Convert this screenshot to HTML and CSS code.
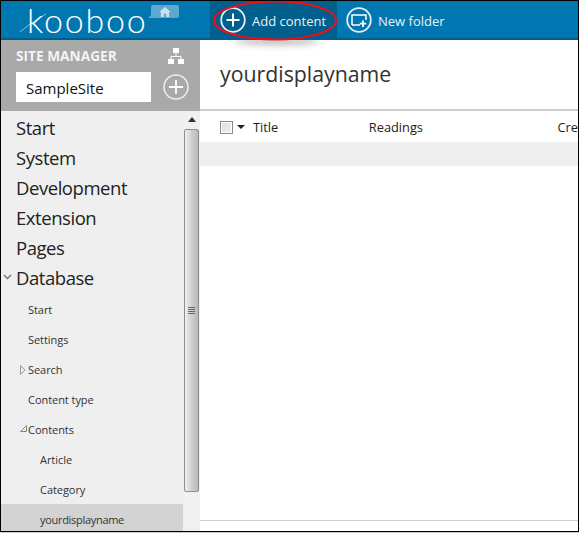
FILE: index.html
```html
<!DOCTYPE html>
<html lang="en">
  <head>
    <meta charset="utf-8">
    <meta name="viewport" content="width=device-width, initial-scale=1.0">
    <title>Kooboo</title>
    <link rel="stylesheet" href="styles.css">
  </head>
  <body>
    <div class="window">
      <!-- top bar -->
      <header class="topbar">
        <div class="brand">
          <svg class="swoosh" width="30" height="22" viewBox="0 0 30 22"><path d="M1 20 Q10 12 27 2" fill="none" stroke="#a9d3e8" stroke-width=".8"/></svg>
          <span class="logo">kooboo</span>
          <span class="home-tag">
            <svg width="12" height="10" viewBox="0 0 14 12"><path d="M7 0 L14 6 H12 V12 H8.500 V8 H5.500 V12 H2 V6 H0 Z" fill="#cfe0ea"/></svg>
          </span>
        </div>
        <div class="action action-active">
          <svg class="action-icon" width="26" height="26" viewBox="0 0 26 26"><circle cx="13" cy="13" r="11.800" fill="none" stroke="#e4eef4" stroke-width="1.800"/><path d="M13 6.500 V19.500 M6.500 13 H19.500" stroke="#fff" stroke-width="2"/></svg>
          <span>Add content</span>
        </div>
        <div class="action">
          <svg class="action-icon" width="26" height="26" viewBox="0 0 26 26"><circle cx="13" cy="13" r="11.800" fill="none" stroke="#e4eef4" stroke-width="1.800"/><path d="M6 18 V8 H20 V13 M6 18 H14" fill="none" stroke="#fff" stroke-width="1.500"/><path d="M17 13.500 V20 M13.800 16.700 H20.200" stroke="#fff" stroke-width="1.800"/></svg>
          <span>New folder</span>
        </div>
        <!-- red marker drawn over the screenshot -->
        <span class="marker-shadow"></span>
        <svg class="marker" width="150" height="44" viewBox="0 0 150 44"><ellipse cx="75" cy="20.500" rx="61" ry="19" fill="none" stroke="#e5101c" stroke-width="2.200"/></svg>
      </header>

      <div class="content">
        <aside class="sidebar">
          <div class="site-panel">
            <div class="site-title">
              <span>SITE MANAGER</span>
              <svg width="18" height="18" viewBox="0 0 18 18"><path d="M6 1 H12 V6 H6 Z M1 12 H7 V17 H1 Z M11 12 H17 V17 H11 Z" fill="#fff"/><path d="M9 6 V9.500 M4 12 V9.500 H14 V12" fill="none" stroke="#fff"/></svg>
            </div>
            <div class="site-row">
              <div class="site-input">SampleSite</div>
              <svg width="26" height="26" viewBox="0 0 26 26"><circle cx="13" cy="13" r="12" fill="none" stroke="#eee" stroke-width="1.500"/><path d="M13 6 V20 M6 13 H20" stroke="#fff" stroke-width="1.800"/></svg>
            </div>
          </div>
          <div class="tree-wrap">
            <ul class="tree">
              <li class="big">Start</li>
              <li class="big">System</li>
              <li class="big">Development</li>
              <li class="big">Extension</li>
              <li class="big">Pages</li>
              <li class="big">
                <svg class="arrow-down" width="9" height="6" viewBox="0 0 9 6"><path d="M1 1 L4.500 4.500 L8 1" fill="none" stroke="#777" stroke-width="1.500"/></svg>
                Database
              </li>
              <li class="small">Start</li>
              <li class="small">Settings</li>
              <li class="small">
                <svg class="arrow" width="6" height="10" viewBox="0 0 6 10"><path d="M.5 .5 L5 5 L.5 9.500 Z" fill="none" stroke="#999"/></svg>
                Search
              </li>
              <li class="small">Content type</li>
              <li class="small">
                <svg class="arrow" width="7" height="7" viewBox="0 0 7 7"><path d="M6.500 .5 V6.500 H.5 Z" fill="none" stroke="#888"/></svg>
                Contents
              </li>
              <li class="small nested">Article</li>
              <li class="small nested">Category</li>
              <li class="small nested selected">yourdisplayname</li>
            </ul>
            <div class="scrollbar">
              <svg class="scroll-up" width="8" height="5" viewBox="0 0 8 5"><path d="M4 0 L8 5 H0 Z" fill="#333"/></svg>
              <div class="scroll-thumb"><span class="grip"></span></div>
            </div>
          </div>
        </aside>

        <main class="main">
          <h1 class="page-title">yourdisplayname</h1>
          <div class="grid-head">
            <span class="check"></span>
            <svg class="caret" width="8" height="4" viewBox="0 0 8 4"><path d="M0 0 H8 L4 4 Z" fill="#222"/></svg>
            <span class="col col-title">Title</span>
            <span class="col col-readings">Readings</span>
            <span class="col">Cre</span>
          </div>
          <div class="grid-row"></div>
          <div class="grid-space"></div>
          <div class="grid-foot"></div>
        </main>
      </div>
    </div>
  </body>
</html>
```

FILE: styles.css
```css
* {
  box-sizing: border-box;
}
html, body {
  margin: 0;
  padding: 0;
  background-color: #ccc;
  color: #222;
  font-family: "Open Sans", "Noto Sans", sans-serif;
}

.window {
  width: 579px;
  height: 532px;
  border: 1px solid #000;
  display: flex;
  flex-direction: column;
  overflow: hidden;
  background-color: #fff;
}

/* top bar */
.topbar {
  position: relative;
  height: 39px;
  flex: none;
  display: flex;
  background-color: #0077b0;
  border-bottom: 2px solid #005f8c;
  color: #e8f1f6;
}
.brand {
  position: relative;
  width: 209px;
}
.swoosh {
  position: absolute;
  left: 18px;
  top: 11px;
}
.logo {
  position: absolute;
  left: 26px;
  top: 0;
  line-height: 38px;
  font-family: Lato, sans-serif;
  font-weight: 300;
  font-size: 34px;
  letter-spacing: 1.800px;
  color: #fff;
}
.home-tag {
  position: absolute;
  left: 150px;
  top: 4px;
  width: 28px;
  height: 13px;
  display: flex;
  align-items: center;
  justify-content: center;
  background-color: #5ea8cf;
  border-radius: 2px;
}
.home-tag::before {
  content: "";
  position: absolute;
  left: -3px;
  bottom: 0;
  border-style: solid;
  border-width: 0 0 4px 4px;
  border-color: transparent transparent #5ea8cf transparent;
}
.action {
  display: flex;
  align-items: center;
  gap: 6px;
  padding: 0 10px 0 9px;
  font-size: 13px;
  height: 37px;
}
.action span {
  padding-top: 2px;
}
.action-active {
  width: 127px;
  padding-left: 10px;
  background-color: #005f8c;
}
.action-icon {
  flex: none;
}
.marker {
  position: absolute;
  left: 199px;
  top: -1px;
  z-index: 2;
}
.marker-shadow {
  position: absolute;
  left: 234px;
  top: 34px;
  width: 84px;
  height: 5px;
  border-radius: 50%;
  box-shadow: 0 4px 6px 1px rgba(90, 90, 90, .4);
  clip-path: inset(4px -20px -20px -20px);
  z-index: 1;
}

/* sidebar */
.content {
  flex: 1;
  display: flex;
  min-height: 0;
}
.sidebar {
  width: 199px;
  flex: none;
  display: flex;
  flex-direction: column;
  background-color: #efefef;
}
.site-panel {
  height: 71px;
  flex: none;
  padding: 5px 10px 0 15px;
  background-color: #a9a9a9;
}
.site-title {
  display: flex;
  justify-content: space-between;
  align-items: center;
  font-size: 13.700px;
  font-weight: 700;
  color: #f4f4f4;
  height: 20px;
}
.site-title svg {
  margin: 2px 5px 0 0;
}
.site-row {
  display: flex;
  justify-content: space-between;
  align-items: center;
  margin-top: 7px;
  padding-right: 1px;
}
.site-input {
  width: 135px;
  height: 30px;
  padding-left: 10px;
  padding-top: 1px;
  line-height: 30px;
  font-size: 15px;
  background-color: #fff;
  color: #111;
}
.tree-wrap {
  flex: 1;
  display: flex;
  min-height: 0;
}
.tree {
  flex: 1;
  margin: 0;
  padding: 3px 0 0 0;
  list-style: none;
}
.tree li {
  position: relative;
  height: 30px;
}
.big {
  padding-left: 15px;
  font-size: 18.500px;
  letter-spacing: -.45px;
  line-height: 28px;
  color: #222;
}
.small {
  padding-left: 27px;
  font-size: 11px;
  letter-spacing: -.05px;
  line-height: 32px;
  color: #333;
}
.nested {
  padding-left: 39px;
}
.selected {
  background-color: #d3d3d3;
  letter-spacing: -.3px;
}
.arrow-down {
  position: absolute;
  left: 2px;
  top: 10px;
}
.arrow {
  position: absolute;
  left: 19px;
  top: 11px;
}

/* scrollbar */
.scrollbar {
  width: 17px;
  flex: none;
  padding-top: 6px;
  display: flex;
  flex-direction: column;
  align-items: center;
  background-color: #f0f0f0;
}
.scroll-up {
  flex: none;
}
.scroll-thumb {
  width: 15px;
  height: 363px;
  margin-top: 7px;
  flex: none;
  display: flex;
  align-items: center;
  justify-content: center;
  border: 1px solid #8f8f8f;
  border-radius: 2px;
  background: linear-gradient(to right, #f0f0f0, #d0d0d0 50%, #b8b8b8);
}
.grip {
  width: 7px;
  height: 7px;
  background: repeating-linear-gradient(to bottom, #666 0, #666 1px, transparent 1px, transparent 2px);
}

/* main area */
.main {
  flex: 1;
  min-width: 0;
  display: flex;
  flex-direction: column;
  overflow: hidden;
}
.page-title {
  height: 71px;
  flex: none;
  margin: 0;
  padding: 0 0 0 20px;
  line-height: 67px;
  font-size: 21.300px;
  font-weight: 400;
  color: #333;
  border-bottom: 2px solid #cfcfcf;
}
.grid-head {
  height: 31px;
  flex: none;
  display: flex;
  align-items: center;
  padding-left: 20px;
  padding-top: 1px;
  font-size: 12.800px;
  white-space: nowrap;
}
.check {
  width: 13px;
  height: 13px;
  flex: none;
  border: 1px solid #8a8a8a;
  background: linear-gradient(135deg, #ddd, #f2f2f2);
  box-shadow: inset 0 0 0 1px #fff;
}
.caret {
  flex: none;
  margin-left: 4px;
}
.col-title {
  width: 116px;
  margin-left: 8px;
}
.col-readings {
  width: 189px;
}
.grid-row {
  height: 24px;
  flex: none;
  background-color: #efefef;
}
.grid-space {
  flex: 1;
}
.grid-foot {
  height: 11px;
  flex: none;
  border-top: 1px solid #cfcfcf;
}
```
